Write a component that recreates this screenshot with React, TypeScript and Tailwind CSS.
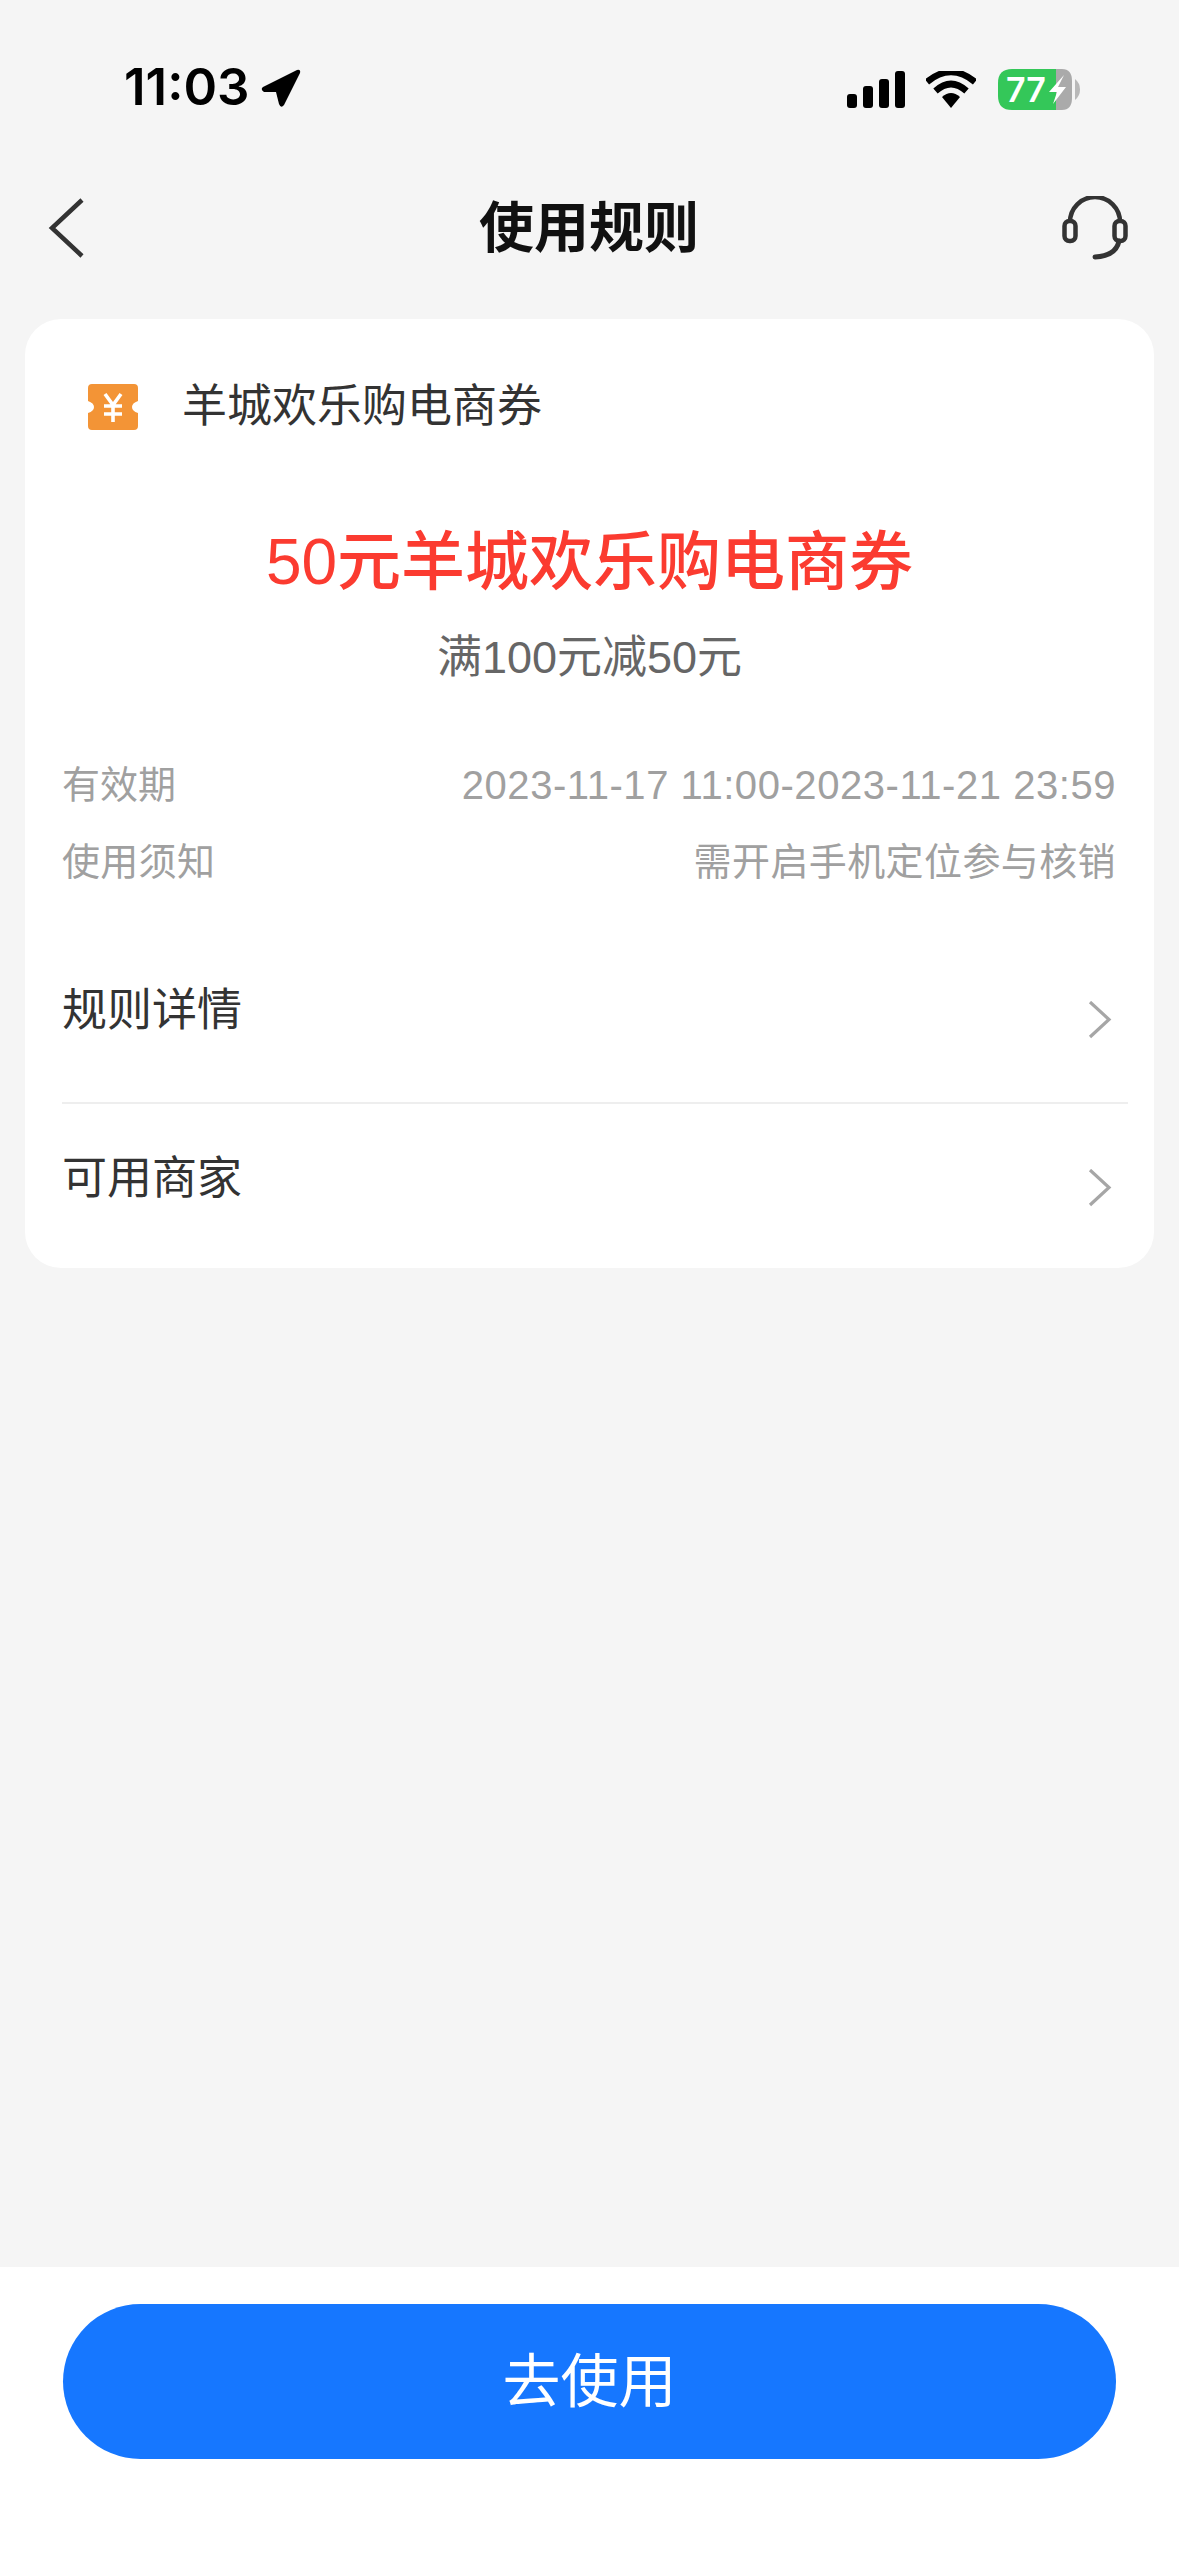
const font = "font-['Liberation_Sans','Noto_Sans_CJK_SC',sans-serif]";

function StatusBar() {
  return (
    <div className="flex h-[130px] items-end justify-between pl-[124px] pr-[97px] pb-[20px]">
      <div className="flex items-center gap-[11px]">
        <span className="font-['Inter',sans-serif] text-[51px] leading-[46px] font-semibold text-black">11:03</span>
        <svg width="41" height="41" viewBox="0 0 41 41">
          <path d="M3 20 L37 3 Q41 2 40 6 L24 38 Q21 42 19 37 L16 25 L4 25 Q0 22 3 20 Z" fill="#000" />
        </svg>
      </div>
      <div className="flex items-center gap-[21px] pr-[1px]">
        <svg width="58" height="37" viewBox="0 0 58 37" className="-ml-[2px]">
          <rect x="0" y="23" width="10" height="14" rx="3" fill="#000" />
          <rect x="16" y="15" width="10" height="22" rx="3" fill="#000" />
          <rect x="32" y="8" width="10" height="29" rx="3" fill="#000" />
          <rect x="48" y="0" width="10" height="37" rx="3" fill="#000" />
        </svg>
        <svg width="50" height="37" viewBox="0 0 50 37">
          <path d="M1 11 Q25 -9 49 11" fill="none" stroke="#000" strokeWidth="6.5" />
          <path d="M9.5 20 Q25 6 40.500 20" fill="none" stroke="#000" strokeWidth="6.5" />
          <path d="M16 26 Q25 18 34 26 L25 37 Z" fill="#000" />
        </svg>
        <svg width="83" height="41" viewBox="0 0 83 41" className="ml-[1px]">
          <path d="M58 0 H64 Q74 0 74 12 V29 Q74 41 64 41 H58 Z" fill="#aaaaaa" />
          <path d="M14 0 H58 V41 H14 Q0 41 0 27 V14 Q0 0 14 0 Z" fill="#34c759" />
          <path d="M77 10 Q82 14 82 20.500 Q82 27 77 31 Z" fill="#b9b9b9" />
          <text x="8" y="33" fontFamily="Inter, sans-serif" fontWeight="600" fontSize="34" fill="#fff">77</text>
          <path d="M66 6 L51 23 H59 L55 35 L68 18 H60 Z" fill="#fff" />
        </svg>
      </div>
    </div>
  );
}

function Chevron() {
  return (
    <svg width="24" height="38" viewBox="0 0 24 38" className="shrink-0">
      <path d="M2 1 L21 18.500 L2 36" fill="none" stroke="#a6a6a6" strokeWidth="3.200" />
    </svg>
  );
}

function NavRow({ label, divider }: { label: string; divider?: boolean }) {
  return (
    <div className={`flex h-[167px] items-center justify-between pr-[16px] ${divider ? "border-b-2 border-[#eeeeee]" : ""}`}>
      <span className="pb-[18px] text-[45px] leading-[60px] text-[#333333]">{label}</span>
      <Chevron />
    </div>
  );
}

export default function App() {
  return (
    <div className={`flex h-[2556px] w-[1179px] flex-col bg-[#f5f5f5] ${font}`}>
      <StatusBar />
      <div className="grid h-[189px] grid-cols-[1fr_auto_1fr] items-center pl-[50px] pr-[51px] pt-[7px]">
        <svg width="36" height="60" viewBox="0 0 36 60" className="-ml-[2px]">
          <path d="M34 2 L4 30 L34 58" fill="none" stroke="#333333" strokeWidth="4.500" />
        </svg>
        <h1 className="text-[55px] leading-[70px] font-bold text-[#111111]">使用规则</h1>
        <svg width="66" height="64" viewBox="0 0 66 64" className="justify-self-end">
          <path d="M8 26 A25 25 0 0 1 58 26" fill="none" stroke="#333333" strokeWidth="4.500" />
          <rect x="2.500" y="25" width="11" height="20" rx="5" fill="none" stroke="#333333" strokeWidth="4.500" />
          <rect x="52.500" y="25" width="11" height="20" rx="5" fill="none" stroke="#333333" strokeWidth="4.500" />
          <path d="M57 45 Q54 60 33 61" fill="none" stroke="#333333" strokeWidth="5" strokeLinecap="round" />
        </svg>
      </div>

      <div className="mx-[25px] h-[949px] rounded-[36px] bg-white pl-[37px] pr-[26px]">
        <div className="flex h-[171px] items-center gap-[44px] pl-[26px] pt-[5px]">
          <svg width="50" height="46" viewBox="0 0 50 46" className="shrink-0">
            <path d="M4 0 H46 Q50 0 50 4 V17 Q44 19 44 23 Q44 27 50 29 V42 Q50 46 46 46 H4 Q0 46 0 42 V29 Q6 27 6 23 Q6 19 0 17 V4 Q0 0 4 0 Z" fill="#f39436" />
            <path d="M17 10 L25 21 L33 10 M16 22 H34 M16 30 H34 M25 21 V38" fill="none" stroke="#fff" strokeWidth="3.600" />
          </svg>
          <span className="text-[45px] leading-[60px] text-[#333333]">羊城欢乐购电商券</span>
        </div>

        <div className="flex flex-col items-center pr-[11px]">
          <div className="mt-[30px] text-[64px] leading-[84px] font-medium text-[#fb3b30]">50元羊城欢乐购电商券</div>
          <div className="mt-[24px] text-[45px] leading-[60px] text-[#666666]">满100元减50元</div>
        </div>

        <div className="mt-[66px] flex flex-col gap-[15px] pr-[12px] text-[38px] leading-[62px] text-[#a0a0a0]">
          <div className="flex justify-between">
            <span>有效期</span>
            <span className="text-[40px] tracking-[0.55px]">2023-11-17 11:00-2023-11-21 23:59</span>
          </div>
          <div className="flex justify-between">
            <span className="tracking-[0.3px]">使用须知</span>
            <span className="tracking-[0.4px]">需开启手机定位参与核销</span>
          </div>
        </div>

        <div className="mt-[44px]">
          <NavRow label="规则详情" divider />
          <NavRow label="可用商家" />
        </div>
      </div>

      <div className="mt-auto flex h-[289px] justify-center bg-white pt-[37px]">
        <button className="h-[155px] w-[1053px] rounded-[78px] bg-[#1677ff] text-[58px] text-white">去使用</button>
      </div>
    </div>
  );
}
